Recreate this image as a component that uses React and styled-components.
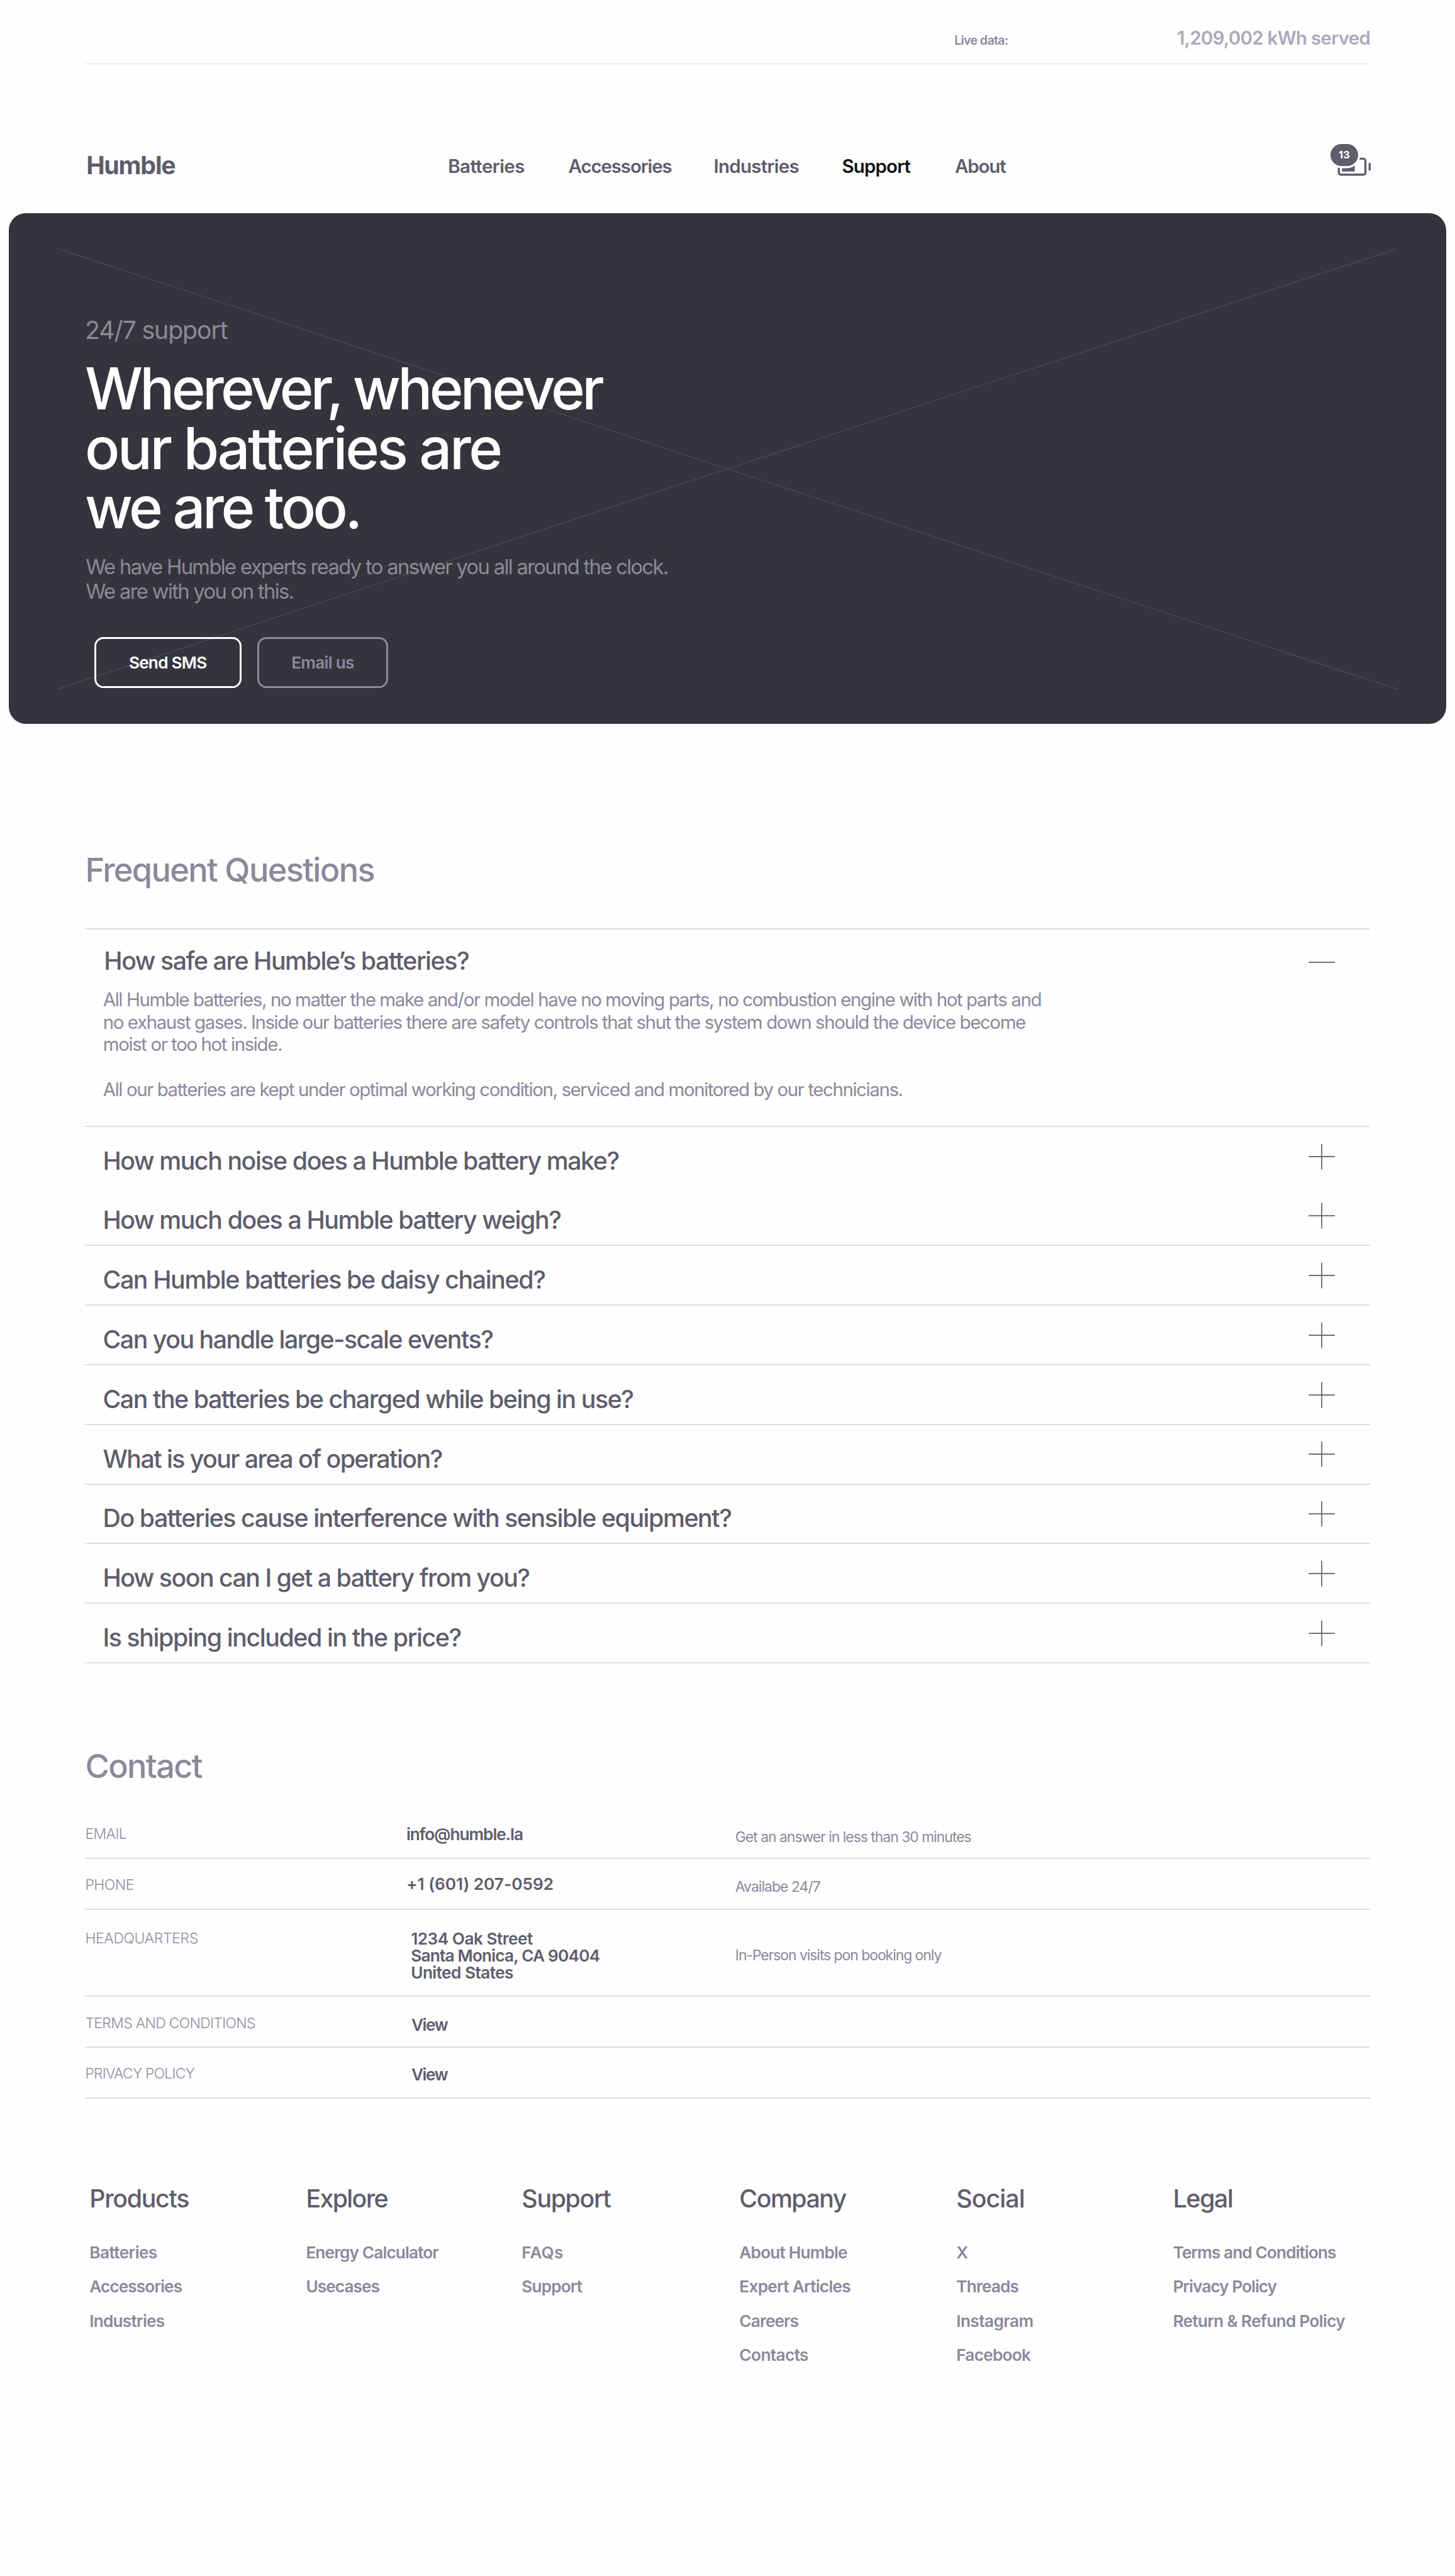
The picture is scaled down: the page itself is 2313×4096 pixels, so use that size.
import React from 'react';
import styled, { createGlobalStyle, css } from 'styled-components';

/* The layout grid is 2732 units wide and is scaled to a 2313px page. */
const u = (n) => `${((n * 2313) / 2732).toFixed(2)}px`;

const color = {
  page: '#fefefe',
  ink: '#5e5d6c',
  muted: '#8b899b',
  soft: '#abaab8',
  label: '#8f8e9e',
  line: '#dedee3',
  hairline: '#f1f1f4',
  hero: '#35343d',
  cross: '#484751',
};

const type = (size, line, weight) => css`
  font-size: ${u(size * 0.968)};
  line-height: ${u(line)};
  font-weight: ${weight};
  letter-spacing: ${(p) => (p.$ls === undefined ? '-0.034em' : `${p.$ls}em`)};
  white-space: nowrap;
`;

const GlobalStyle = createGlobalStyle`
  * { box-sizing: border-box; margin: 0; padding: 0; }
  body {
    background: ${color.page};
    font-family: Inter, "Liberation Sans", sans-serif;
    color: ${color.ink};
    -webkit-font-smoothing: antialiased;
  }
  a { color: inherit; text-decoration: none; }
  ul { list-style: none; }
`;

const Page = styled.div`
  width: 2313px;
  height: 4096px;
  overflow: hidden;
  background: ${color.page};
`;

/* ---------- live data bar ---------- */

const LiveBar = styled.div`
  display: grid;
  grid-template-columns: ${u(1632)} ${u(418)} auto;
  align-items: baseline;
  height: ${u(122)};
  margin: 0 ${u(160)};
  padding-top: ${u(49.6)};
  border-bottom: ${u(4)} solid ${color.hairline};
`;

const LiveLabel = styled.span`
  grid-column: 2;
  color: ${color.muted};
  ${type(24, 28, 600)}
`;

const LiveValue = styled.span`
  color: ${color.soft};
  ${type(36, 44, 600)}
`;

/* ---------- header ---------- */

const Header = styled.header`
  display: grid;
  grid-template-columns: ${u(681.3)} 1fr auto;
  align-items: start;
  height: ${u(278)};
  padding: ${u(146)} ${u(156)} 0 ${u(160)};
`;

const Logo = styled.a`
  padding: ${u(19)} 0 0 ${u(2)};
  ${type(48, 48, 700)}
`;

const Nav = styled.nav`
  display: grid;
  grid-template-columns: ${u(225.9)} ${u(272.8)} ${u(241)} ${u(211.9)} auto;
  padding-top: ${u(22)};
`;

const NavLink = styled.a`
  color: ${(p) => (p.$active ? '#121214' : color.ink)};
  ${type(36, 44, 600)}
`;

const Cart = styled.a`
  position: relative;
  width: ${u(80)};
  height: ${u(64)};

  svg {
    display: block;
    width: 100%;
    height: 100%;
  }
`;

const CartBadge = styled.span`
  position: absolute;
  left: ${u(2)};
  top: ${u(2)};
  width: ${u(52.4)};
  height: ${u(42)};
  display: flex;
  align-items: center;
  justify-content: center;
  border-radius: ${u(21)};
  background: ${color.ink};
  box-shadow: 0 0 0 ${u(4)} ${color.page};
  color: #fff;
  ${type(20, 24, 700)}
`;

/* ---------- hero ---------- */

const Hero = styled.section`
  position: relative;
  height: ${u(960)};
  margin: 0 ${u(16)};
  padding: ${u(191.8)} 0 0 ${u(143.4)};
  border-radius: ${u(32)};
  background: ${color.hero};
  overflow: hidden;
`;

const HeroCross = styled.svg`
  position: absolute;
  left: ${u(92)};
  top: ${u(66.5)};
  width: ${u(2517)};
  height: ${u(828)};
`;

const HeroContent = styled.div`
  position: relative;
`;

const Eyebrow = styled.p`
  color: ${color.muted};
  ${type(48, 56, 400)}
`;

const HeroTitle = styled.h1`
  margin-top: ${u(26.3)};
  color: #fff;
`;

const HeroTitleLine = styled.span`
  display: block;
  ${type(112, 112, 500)}
`;

const HeroText = styled.p`
  margin: ${u(32.2)} 0 0 ${u(1.4)};
  color: ${color.muted};
  ${type(40, 46, 400)}
`;

const HeroActions = styled.div`
  display: flex;
  gap: ${u(29.6)};
  margin: ${u(61.7)} 0 0 ${u(17.6)};
`;

const OutlineButton = styled.button`
  width: ${(p) => u(p.$width)};
  height: ${u(96)};
  padding-top: ${u(1)};
  border: ${u(4)} solid currentColor;
  border-radius: ${u(17)};
  background: transparent;
  color: ${(p) => (p.$primary ? '#fff' : color.muted)};
  font-family: inherit;
  ${type(32, 40, 600)}
`;

/* ---------- shared ---------- */

const SectionTitle = styled.h2`
  color: ${color.muted};
  ${type(64, 80, 500)}
`;

/* ---------- faq ---------- */

const Faq = styled.section`
  padding: ${u(234.8)} ${u(160)} 0;
`;

const FaqList = styled.ul`
  margin-top: ${u(68.2)};
  padding-bottom: ${u(2)};
  box-shadow: inset 0 -2px 0 ${color.line};
`;

const FaqItem = styled.li`
  display: flex;
  justify-content: space-between;
  height: ${(p) => u(p.$open ? 371.5 : p.$h || 112)};
  padding: 0 ${u(65)} 0 ${(p) => u(p.$open ? 35.3 : 33.1)};
  box-shadow: ${(p) => (p.$line ? `inset 0 2px 0 ${color.line}` : 'none')};
`;

const FaqBody = styled.div`
  padding-top: ${(p) => u(p.$open ? 33.4 : 37.5)};
`;

const Question = styled.h3`
  ${type(48, 56, 500)}
`;

const Answer = styled.p`
  margin: ${u(24.8)} 0 ${u(42)} ${u(-1.9)};
  color: ${color.muted};
  ${type(36, 42, 400)}

  & + & {
    margin-top: 0;
  }
`;

const Toggle = styled.svg`
  flex: none;
  width: ${u(50)};
  height: ${u(50)};
  margin-top: ${(p) => u(p.$open ? 39.4 : 32.6)};
  stroke: ${color.ink};
  stroke-width: 2;
  fill: none;
`;

/* ---------- contact ---------- */

const Contact = styled.section`
  padding: ${u(154.2)} ${u(160)} 0;
`;

const ContactTable = styled.div`
  margin-top: ${u(37.7)};
`;

const ContactRow = styled.div`
  display: grid;
  grid-template-columns: ${u(603)} ${u(617.5)} 1fr;
  height: ${(p) => u(p.$height)};
  box-shadow: inset 0 -2px 0 ${color.line};
`;

const ContactLabel = styled.span`
  padding-top: ${(p) => u(p.$top + 1)};
  color: ${color.label};
  ${type(28, 32, 300)}
`;

const ContactValue = styled.div`
  padding: ${(p) => u(p.$top)} 0 0 ${(p) => u(p.$indent || 0)};
`;

const ContactLine = styled.span`
  display: block;
  ${type(32, 32, 600)}
`;

const ContactNote = styled.span`
  padding-top: ${(p) => u(p.$top + 1)};
  color: ${color.muted};
  ${type(28, 32, 400)}
`;

/* ---------- footer ---------- */

const Footer = styled.footer`
  display: grid;
  grid-template-columns: ${[406.5, 405.1, 408.7, 407.3, 406.9].map(u).join(' ')} auto;
  padding: ${u(159.3)} 0 0 ${u(168)};
`;

const FooterTitle = styled.h4`
  ${type(48, 56, 500)}
`;

const FooterLinks = styled.ul`
  margin-top: ${u(42.2)};
  color: ${color.muted};
`;

const FooterLink = styled.a`
  display: block;
  ${type(32, 64, 600)}
`;

/* ---------- data ---------- */

const nav = [
  { text: 'Batteries', ls: -0.0199 },
  { text: 'Accessories', ls: -0.0385 },
  { text: 'Industries', ls: -0.0243 },
  { text: 'Support', ls: -0.0292, active: true },
  { text: 'About', ls: -0.0388 },
];

const closedQuestions = [
  { text: 'How much noise does a Humble battery make?', ls: -0.0367, line: true, h: 111.5 },
  { text: 'How much does a Humble battery weigh?', ls: -0.0359 },
  { text: 'Can Humble batteries be daisy chained?', ls: -0.0354, line: true },
  { text: 'Can you handle large-scale events?', ls: -0.0381, line: true },
  { text: 'Can the batteries be charged while being in use?', ls: -0.0372, line: true },
  { text: 'What is your area of operation?', ls: -0.0401, line: true },
  { text: 'Do batteries cause interference with sensible equipment?', ls: -0.0369, line: true },
  { text: 'How soon can I get a battery from you?', ls: -0.0389, line: true },
  { text: 'Is shipping included in the price?', ls: -0.036, line: true },
];

const contacts = [
  {
    label: 'EMAIL', labelLs: -0.0265, labelTop: 31.9, height: 96,
    lines: [['info@humble.la', -0.0392]], top: 33.3,
    note: 'Get an answer in less than 30 minutes', noteLs: -0.0442, noteTop: 38,
  },
  {
    label: 'PHONE', labelLs: -0.0212, labelTop: 32.2, height: 96,
    lines: [['+1 (601) 207-0592', -0.0007]], top: 30.7,
    note: 'Availabe 24/7', noteLs: -0.0417, noteTop: 35.9,
  },
  {
    label: 'HEADQUARTERS', labelLs: -0.0159, labelTop: 35.7, height: 162, indent: 8.5,
    lines: [['1234 Oak Street', -0.0197], ['Santa Monica, CA 90404', -0.0306], ['United States', -0.0214]], top: 36.7,
    note: 'In-Person visits pon booking only', noteLs: -0.0456, noteTop: 68.3,
  },
  {
    label: 'TERMS AND CONDITIONS', labelLs: -0.0301, labelTop: 34.2, height: 96, indent: 9.4,
    lines: [['View', -0.055]], top: 36.6,
  },
  {
    label: 'PRIVACY POLICY', labelLs: -0.035, labelTop: 32.1, height: 96, indent: 9.4,
    lines: [['View', -0.055]], top: 34.8,
  },
];

const footer = [
  { title: 'Products', ls: -0.0332, links: [['Batteries', -0.0223], ['Accessories', -0.0345], ['Industries', -0.0293]] },
  { title: 'Explore', ls: -0.0421, links: [['Energy Calculator', -0.0337], ['Usecases', -0.0353]] },
  { title: 'Support', ls: -0.0348, links: [['FAQs', 0.0028], ['Support', -0.0337]] },
  { title: 'Company', ls: -0.0386, links: [['About Humble', -0.0316], ['Expert Articles', -0.0276], ['Careers', -0.0341], ['Contacts', -0.0235]] },
  { title: 'Social', ls: -0.0231, links: [['X', 0], ['Threads', -0.0314], ['Instagram', -0.0216], ['Facebook', -0.029]] },
  { title: 'Legal', ls: -0.0361, links: [['Terms and Conditions', -0.0348], ['Privacy Policy', -0.0366], ['Return & Refund Policy', -0.0273]] },
];

function ToggleIcon({ open }) {
  return (
    <Toggle viewBox="0 0 50 50" $open={open} aria-hidden="true">
      <path d={open ? 'M0.5 25H49.5' : 'M0.5 25H49.5M25 1V49'} />
    </Toggle>
  );
}

export default function App() {
  return (
    <Page>
      <GlobalStyle />

      <LiveBar>
        <LiveLabel $ls={-0.0342}>Live data:</LiveLabel>
        <LiveValue $ls={-0.0252}>1,209,002 kWh served</LiveValue>
      </LiveBar>

      <Header>
        <Logo href="#" $ls={-0.0305}>Humble</Logo>
        <Nav>
          {nav.map((item) => (
            <NavLink key={item.text} href="#" $ls={item.ls} $active={item.active}>
              {item.text}
            </NavLink>
          ))}
        </Nav>
        <Cart href="#" aria-label="Cart">
          <svg viewBox="0 0 80 64" aria-hidden="true">
            <rect x="18" y="30" width="50" height="30" rx="4" fill="none" stroke={color.ink} strokeWidth="4" />
            <rect x="24" y="36" width="24" height="18" fill={color.ink} />
            <rect x="74" y="38" width="4" height="14" fill={color.ink} />
          </svg>
          <CartBadge $ls={0.02}>13</CartBadge>
        </Cart>
      </Header>

      <Hero>
        <HeroCross viewBox="0 0 2517 828" preserveAspectRatio="none" aria-hidden="true">
          <path d="M0 0L2517 828M2517 0L0 828" stroke={color.cross} strokeWidth="2" />
        </HeroCross>
        <HeroContent>
          <Eyebrow $ls={-0.0292}>24/7 support</Eyebrow>
          <HeroTitle>
            <HeroTitleLine $ls={-0.0515}>Wherever, whenever</HeroTitleLine>
            <HeroTitleLine $ls={-0.0385}>our batteries are</HeroTitleLine>
            <HeroTitleLine $ls={-0.0488}>we are too.</HeroTitleLine>
          </HeroTitle>
          <HeroText $ls={-0.0513}>
            We have Humble experts ready to answer you all around the clock.
            <br />
            We are with you on this.
          </HeroText>
          <HeroActions>
            <OutlineButton $primary $width={276} $ls={-0.03}>Send SMS</OutlineButton>
            <OutlineButton $width={246.6} $ls={-0.0278}>Email us</OutlineButton>
          </HeroActions>
        </HeroContent>
      </Hero>

      <Faq>
        <SectionTitle $ls={-0.0336}>Frequent Questions</SectionTitle>
        <FaqList>
          <FaqItem $open $line>
            <FaqBody $open>
              <Question $ls={-0.0373}>How safe are Humble’s batteries?</Question>
              <Answer $ls={-0.0482}>
                All Humble batteries, no matter the make and/or model have no moving parts, no combustion engine with hot parts and
                <br />
                no exhaust gases. Inside our batteries there are safety controls that shut the system down should the device become
                <br />
                moist or too hot inside.
              </Answer>
              <Answer $ls={-0.0487}>
                All our batteries are kept under optimal working condition, serviced and monitored by our technicians.
              </Answer>
            </FaqBody>
            <ToggleIcon open />
          </FaqItem>
          {closedQuestions.map((q) => (
            <FaqItem key={q.text} $line={q.line} $h={q.h}>
              <FaqBody>
                <Question $ls={q.ls}>{q.text}</Question>
              </FaqBody>
              <ToggleIcon />
            </FaqItem>
          ))}
        </FaqList>
      </Faq>

      <Contact>
        <SectionTitle $ls={-0.0336}>Contact</SectionTitle>
        <ContactTable>
          {contacts.map((c) => (
            <ContactRow key={c.label} $height={c.height}>
              <ContactLabel $top={c.labelTop} $ls={c.labelLs}>{c.label}</ContactLabel>
              <ContactValue $top={c.top} $indent={c.indent}>
                {c.lines.map(([text, ls]) => (
                  <ContactLine key={text} $ls={ls}>{text}</ContactLine>
                ))}
              </ContactValue>
              {c.note && <ContactNote $top={c.noteTop} $ls={c.noteLs}>{c.note}</ContactNote>}
            </ContactRow>
          ))}
        </ContactTable>
      </Contact>

      <Footer>
        {footer.map((col) => (
          <div key={col.title}>
            <FooterTitle $ls={col.ls}>{col.title}</FooterTitle>
            <FooterLinks>
              {col.links.map(([text, ls]) => (
                <li key={text}>
                  <FooterLink href="#" $ls={ls}>{text}</FooterLink>
                </li>
              ))}
            </FooterLinks>
          </div>
        ))}
      </Footer>
    </Page>
  );
}
